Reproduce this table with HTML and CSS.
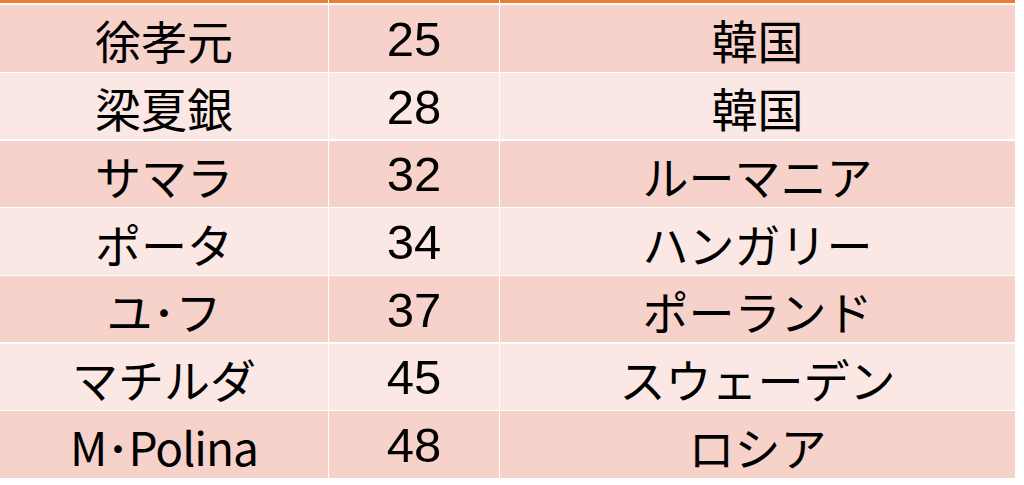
FILE: index.html
```html
<!DOCTYPE html>
<html lang="ja">
<head>
<meta charset="utf-8">
<title>表</title>
<link rel="stylesheet" href="styles.css">
</head>
<body>
<div class="table">
  <div class="head"></div><div class="head"></div><div class="head"></div>

  <div class="cell dark">徐孝元</div><div class="cell dark num">25</div><div class="cell dark">韓国</div>
  <div class="cell light">梁夏銀</div><div class="cell light num">28</div><div class="cell light">韓国</div>
  <div class="cell dark">サマラ</div><div class="cell dark num">32</div><div class="cell dark">ルーマニア</div>
  <div class="cell light">ポータ</div><div class="cell light num">34</div><div class="cell light">ハンガリー</div>
  <div class="cell dark">ユ･フ</div><div class="cell dark num">37</div><div class="cell dark">ポーランド</div>
  <div class="cell light">マチルダ</div><div class="cell light num">45</div><div class="cell light">スウェーデン</div>
  <div class="cell dark latin">M･Polina</div><div class="cell dark num">48</div><div class="cell dark">ロシア</div>
</div>
</body>
</html>
```

FILE: styles.css
```css
html, body {
  margin: 0;
  padding: 0;
  background: #ffffff;
}

.table {
  display: grid;
  grid-template-columns: 328px 170px 515px;
  grid-template-rows: 4px repeat(7, 66.5px);
  column-gap: 1px;
  row-gap: 1.2px;
  width: 1015px;
  background: #ffffff;
}

.head {
  height: 3px;
  align-self: start;
  background: #ed7d31;
}

.cell {
  display: flex;
  align-items: center;
  justify-content: center;
  font-family: "Noto Sans CJK JP", "Noto Sans", sans-serif;
  font-size: 46px;
  line-height: 1;
  color: #000000;
  padding-top: 2px;
  box-sizing: border-box;
}

.latin {
  letter-spacing: -1px;
}

.num {
  font-family: "Liberation Sans", Arial, sans-serif;
  font-size: 49px;
}

.dark {
  background: #f6d2ca;
}

.light {
  background: #fbe8e4;
}
```
